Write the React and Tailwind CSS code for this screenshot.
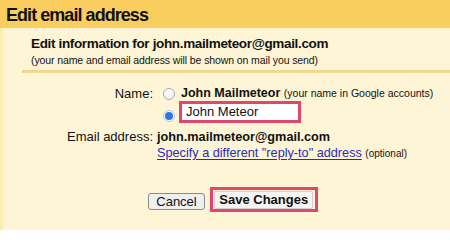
import React from "react";

function Radio({ checked }) {
  if (checked) {
    return (
      <span className="flex h-[12px] w-[12px] shrink-0 items-center justify-center rounded-full border border-[#b9c4d6] bg-white">
        <span className="h-[8px] w-[8px] rounded-full bg-[#2a74e8]" />
      </span>
    );
  }
  return (
    <span className="h-[12px] w-[12px] shrink-0 rounded-full border border-[#a9a9a9] bg-gradient-to-b from-white to-[#f0f0f0]" />
  );
}

export default function App() {
  return (
    <div className="h-[230px] w-[450px] overflow-hidden bg-[#fef5d6] font-['Liberation_Sans',Arial,sans-serif] text-[#111]">
      <div className="h-[28px] bg-[#f9ce5f] pl-[6px] pt-[1px] text-[18px] font-bold leading-[28px] tracking-[-0.95px]">
        Edit email address
      </div>
      <div className="h-[202px] border-l-[3px] border-[#fbeeb0]">
        <div className="pl-[28px] pt-[8px]">
          <div className="text-[13.5px] font-bold leading-[16px] tracking-[-0.35px]">
            Edit information for john.mailmeteor@gmail.com
          </div>
          <div className="mt-[2px] text-[10.5px] leading-[13px] tracking-[-0.1px]">
            (your name and email address will be shown on mail you send)
          </div>
        </div>
        <div className="ml-[19px] mt-[3px] h-[3px] bg-[#efd98e]" />

        <div className="mt-[13px] grid grid-cols-[150px_1fr]">
          <div className="text-right text-[13px] leading-[15px]">Name:</div>
          <div className="flex flex-col pl-[10px]">
            <div className="flex h-[15px] items-center gap-[6px]">
              <Radio />
              <span className="text-[12.5px] font-bold leading-[15px]">
                John Mailmeteor{" "}
                <span className="text-[10.5px] font-normal">(your name in Google accounts)</span>
              </span>
            </div>
            <div className="flex items-start gap-[4px]">
              <span className="mt-[9px]">
                <Radio checked />
              </span>
              <div className="h-[22px] w-[122px] border-[3px] border-[#e2466c] bg-white pl-[4px] text-[13px] leading-[16px]">
                John Meteor
              </div>
            </div>
          </div>

          <div className="mt-[5.5px] text-right text-[13px] leading-[16px]">Email address:</div>
          <div className="mt-[5.5px] pl-[4px] text-[12.7px] font-bold leading-[16px]">
            john.mailmeteor@gmail.com
          </div>

          <div />
          <div className="pl-[4px] text-[12.7px] leading-[16px]">
            <a className="text-[#2b2bb3] underline underline-offset-[2px]" href="#">
              Specify a different "reply-to" address
            </a>{" "}
            <span className="text-[10px]">(optional)</span>
          </div>
        </div>

        <div className="ml-[145px] mt-[25.5px] flex items-start gap-[4.5px]">
          <button className="mt-[6px] flex h-[17px] w-[57px] items-center justify-center rounded-[3px] border border-[#8c8c8c] bg-[#efefef] text-[13px] leading-[15px]">
            Cancel
          </button>
          <div className="flex h-[25px] w-[108.5px] items-center justify-center border-[3px] border-[#e2466c]">
            <button className="flex h-[18px] w-[99px] items-center justify-center rounded-[2px] border border-[#d0d0d0] bg-[#f4f4f4] text-[13px] font-bold leading-[15px]">
              Save Changes
            </button>
          </div>
        </div>
      </div>
    </div>
  );
}
